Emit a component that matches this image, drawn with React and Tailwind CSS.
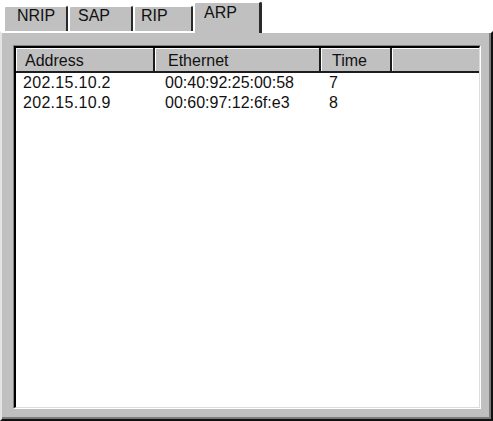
const tabs = [
  { label: 'NRIP', w: 'w-[65px]', pl: 'pl-[12px]' },
  { label: 'SAP', w: 'w-[65px]', pl: 'pl-[8px]' },
  { label: 'RIP', w: 'w-[60px]', pl: 'pl-[6px]' },
];

const rows = [
  { address: '202.15.10.2', ethernet: '00:40:92:25:00:58', time: '7' },
  { address: '202.15.10.9', ethernet: '00:60:97:12:6f:e3', time: '8' },
];

const headCell = 'h-[25px] pt-[3px] leading-[20px] bg-[#c0c0c0] border-b-2 border-b-[#1c1c1c] shadow-[inset_1px_1px_0_#ffffff]';

export default function App() {
  return (
    <div className="w-[493px] h-[421px] bg-white flex flex-col font-['Liberation_Sans',Arial,sans-serif] text-[16px] text-[#111]">
      {/* tab strip */}
      <div className="h-[31px] flex items-end pl-[3px] shrink-0">
        {tabs.map((t) => (
          <div
            key={t.label}
            className={`${t.w} ${t.pl} h-[26px] bg-[#c0c0c0] border-t-2 border-l-2 border-r-2 border-t-white border-l-white border-r-[#2a2a2a] rounded-t-[3px] leading-[18px]`}
          >
            {t.label}
          </div>
        ))}
        <div className="relative z-10 w-[69px] h-[32px] -mb-[2px] pl-[9px] bg-[#c0c0c0] border-t-2 border-l-2 border-r-[3px] border-t-white border-l-white border-r-[#2a2a2a] rounded-t-[3px] leading-[20px]">
          ARP
        </div>
      </div>

      {/* page */}
      <div className="flex-1 flex flex-col bg-[#c0c0c0] border-t-2 border-l-2 border-r-2 border-b-2 border-t-white border-l-[#e4e4e4] border-r-[#111] border-b-[#111] shadow-[inset_-2px_-2px_0_#7c7c7c]">
        <div className="flex-1 flex flex-col mt-[12px] ml-[11px] mr-[10px] mb-[10px] border border-t-[#808080] border-l-[#808080] border-r-white border-b-white">
          <div className="flex-1 flex flex-col bg-white border-t-2 border-l-2 border-r border-b border-t-black border-l-black border-r-[#dcdcdc] border-b-[#dcdcdc]">
            <div className="flex shrink-0">
              <div className={`${headCell} w-[139px] pl-[9px] border-r-2 border-r-[#1c1c1c]`}>Address</div>
              <div className={`${headCell} w-[166px] pl-[13px] border-r-2 border-r-[#1c1c1c]`}>Ethernet</div>
              <div className={`${headCell} w-[71px] pl-[11px] border-r-2 border-r-[#1c1c1c]`}>Time</div>
              <div className={`${headCell} flex-1`} />
            </div>
            {rows.map((r) => (
              <div key={r.address} className="flex leading-[20px] h-[20px]">
                <div className="w-[139px] pl-[7px] tracking-[0.3px]">{r.address}</div>
                <div className="w-[166px] pl-[10px]">{r.ethernet}</div>
                <div className="w-[71px] pl-[8px]">{r.time}</div>
              </div>
            ))}
          </div>
        </div>
      </div>
    </div>
  );
}
